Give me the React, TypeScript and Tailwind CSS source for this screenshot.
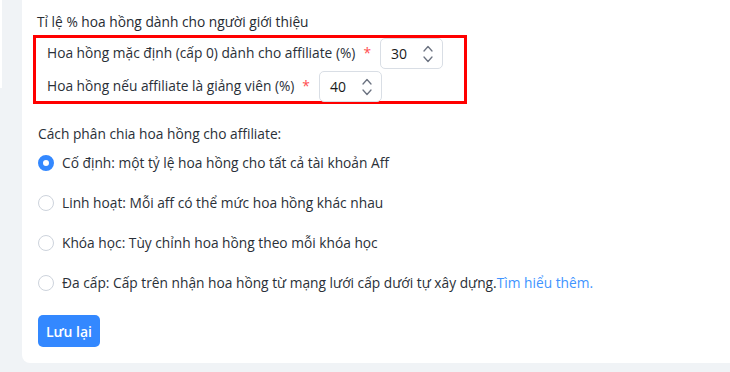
import { useState } from "react";

const options = [
  { key: "fixed", label: "Cố định: một tỷ lệ hoa hồng cho tất cả tài khoản Aff" },
  { key: "flex", label: "Linh hoạt: Mỗi aff có thể mức hoa hồng khác nhau" },
  { key: "course", label: "Khóa học: Tùy chỉnh hoa hồng theo mỗi khóa học" },
  { key: "multi", label: "Đa cấp: Cấp trên nhận hoa hồng từ mạng lưới cấp dưới tự xây dựng.", link: "Tìm hiểu thêm." },
];

function NumberBox({ value }: { value: string }) {
  return (
    <div className="flex items-center w-[63px] h-[31px] border border-[#d9dee5] rounded-[5px] bg-white pl-[10px] pr-[8px]">
      <span className="flex-1 text-[14px] text-[#1a1a1a]">{value}</span>
      <svg width="12" height="22" viewBox="0 0 12 22" fill="none" stroke="#6b7280" strokeWidth="1.3" strokeLinecap="round" strokeLinejoin="round">
        <path d="M2 8 L6 3.5 L10 8" />
        <path d="M2 14 L6 18.5 L10 14" />
      </svg>
    </div>
  );
}

export default function App() {
  const [selected, setSelected] = useState("fixed");

  return (
    <div className="w-[730px] h-[372px] bg-[#f0f3f6] flex overflow-hidden" style={{ fontFamily: '"Open Sans", "Noto Sans", sans-serif' }}>
      <div className="w-[22px] shrink-0">
        <div className="w-[2px] h-[88px] bg-white" />
      </div>
      <div className="flex-1 h-[363px] bg-white rounded-bl-[8px] pl-[11px] pt-[12px] text-[13.75px] text-[#2a3038] font-medium">
        <div className="pl-[4px] leading-[20px] text-[#262b32]">Tỉ lệ % hoa hồng dành cho người giới thiệu</div>
        <div className="mt-[3px] w-[434px] h-[69px] border-[3px] border-[#ff0000] pl-[11px] pt-[0px] flex flex-col gap-[2px]">
          <div className="flex items-center h-[31px]">
            <span>Hoa hồng mặc định (cấp 0) dành cho affiliate (%)</span>
            <span className="text-[#ff4d4f] ml-[8px] mr-[9px]">*</span>
            <NumberBox value="30" />
          </div>
          <div className="flex items-center h-[31px]">
            <span>Hoa hồng nếu affiliate là giảng viên (%)</span>
            <span className="text-[#ff4d4f] ml-[8px] mr-[9px]">*</span>
            <NumberBox value="40" />
          </div>
        </div>

        <div className="pl-[5px] mt-[20px] leading-[20px]">Cách phân chia hoa hồng cho affiliate:</div>
        <div className="pl-[5px] mt-[9px] flex flex-col gap-[20px]">
          {options.map((o) => (
            <label key={o.key} className="flex items-center h-[20px] cursor-pointer" onClick={() => setSelected(o.key)}>
              {selected === o.key ? (
                <span className="w-[16px] h-[16px] rounded-full border-[5px] border-[#3388ff] bg-white shrink-0" />
              ) : (
                <span className="w-[16px] h-[16px] rounded-full border border-[#cdd3dc] bg-white shrink-0" />
              )}
              <span className="ml-[8px]">
                {o.label}
                {o.link && <a className="text-[#4094ff]">{o.link}</a>}
              </span>
            </label>
          ))}
        </div>

        <button className="ml-[5px] mt-[22px] h-[32px] w-[62px] rounded-[5px] bg-[#3388ff] text-white font-semibold text-[14px]">
          Lưu lại
        </button>
      </div>
    </div>
  );
}
